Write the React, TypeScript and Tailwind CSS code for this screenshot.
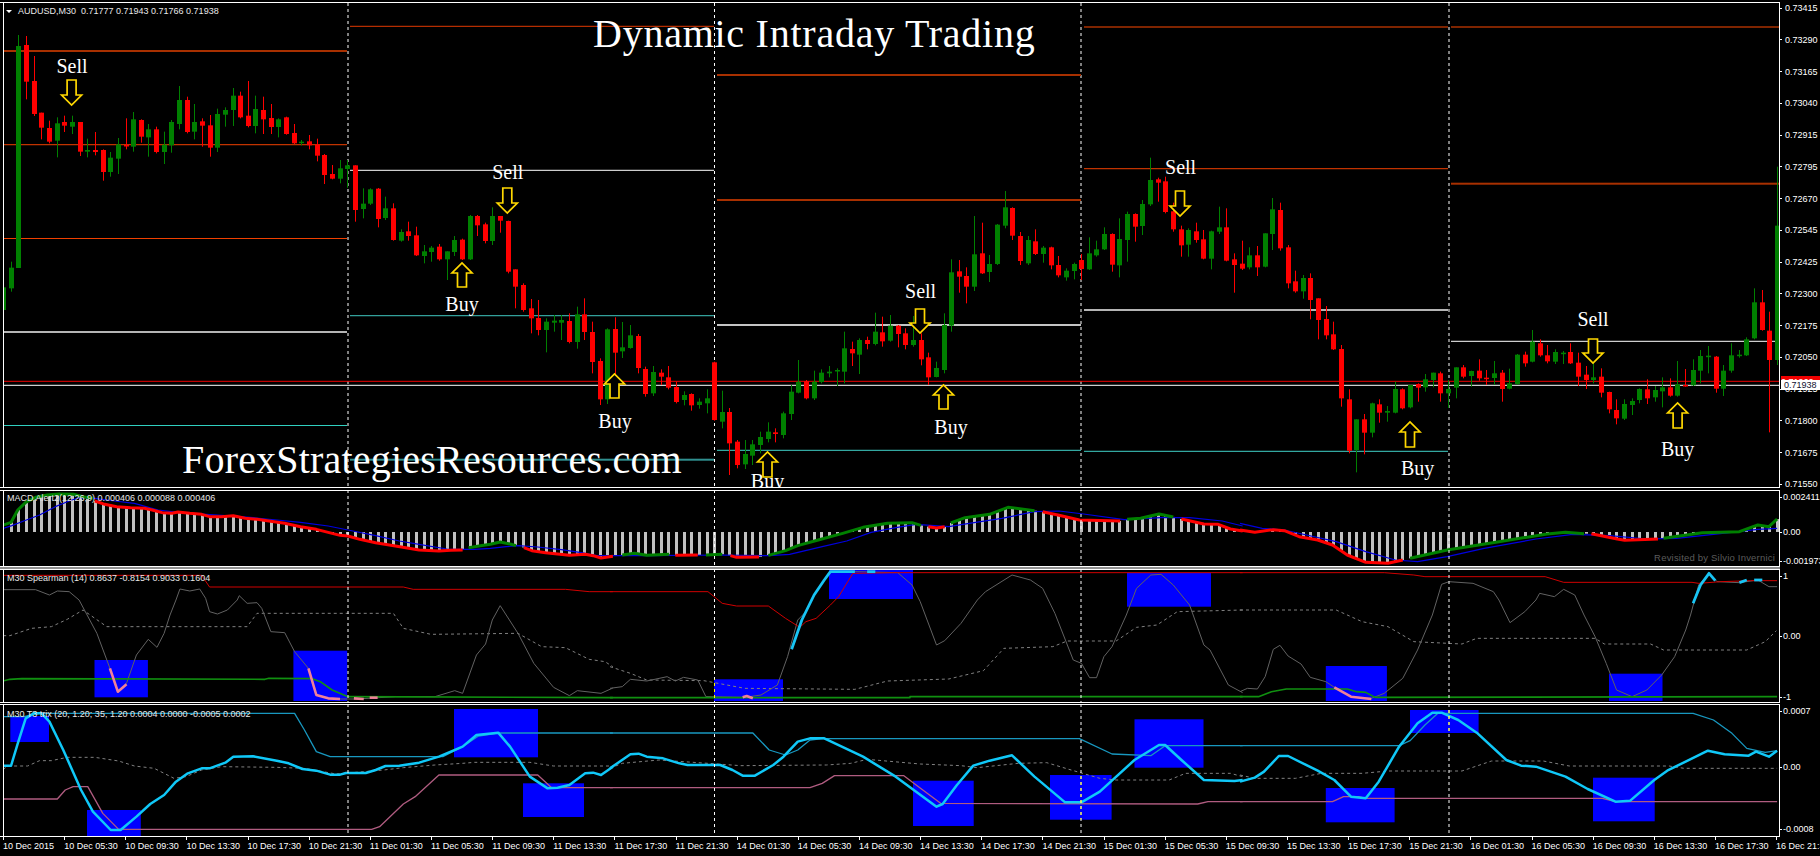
import React from "react"

type Crop = "a" | "b" | "c"
type Pt = [number, number]
type Pt3 = [number, number, number]
type Candle = ["G" | "R", number, number, number, number]

const GREEN = "#008000"
const RED = "#ff0000"
const BAR_X0 = 3.2
const BAR_STEP = 7.645

// measured on three overlapping crops of the chart, y is always px * 3
const CROPS: Record<Crop, [number, number]> = { a: [0, 620], b: [610, 640], c: [1240, 580] }

function toPts(crop: Crop, top: number, raw: string): Pt[] {
  const [x0, w] = CROPS[crop]
  return raw.split(" ").map((p) => {
    const [x, y] = p.split(",").map(Number)
    return [x0 + (x * w) / 1568, top + y / 3] as Pt
  })
}

const ptsAttr = (pts: Pt[]) => pts.map((p) => p.join(",")).join(" ")

// color, body top, body bottom, high, low
const CANDLES: Candle[] = [
  ["G",862,930,862,945],["G",803,865,785,875],["G",138,804,105,804],["R",135,245,108,298],["R",243,342,168,348],
  ["R",338,383,338,418],["R",384,425,362,430],["G",370,422,352,472],["R",366,377,347,396],["G",366,380,347,402],
  ["R",366,455,366,468],["G",450,455,416,472],["R",450,456,396,466],["R",450,516,448,542],["G",473,516,456,530],
  ["G",433,476,414,522],["R",435,438,355,448],["G",358,440,336,455],["R",360,410,358,428],["G",388,412,372,470],
  ["R",388,456,380,460],["G",434,456,395,492],["G",366,436,360,458],["G",300,372,258,388],["R",300,396,290,400],
  ["G",366,395,312,418],["R",364,377,355,440],["R",376,443,345,470],["G",342,443,326,456],["G",330,344,322,380],
  ["G",287,330,264,378],["R",287,352,275,355],["R",347,378,243,382],["G",327,378,287,400],["R",330,358,290,402],
  ["R",354,381,312,402],["G",358,381,355,412],["R",352,402,350,404],["R",399,430,372,432],["G",425,428,420,436],
  ["R",424,436,405,448],["R",434,467,416,484],["R",465,525,462,552],["R",522,536,495,538],["G",505,536,480,550],
  ["G",496,507,480,563],["R",496,630,496,665],["G",611,627,565,655],["G",568,611,565,615],["R",566,657,564,682],
  ["G",625,654,590,660],["R",625,720,610,722],["G",696,722,688,725],["R",694,708,665,722],["R",706,766,680,768],
  ["G",754,768,735,790],["G",743,756,738,785],["R",740,778,732,782],["G",754,778,754,840],["G",720,756,708,768],
  ["R",719,778,716,780],["G",648,778,645,780],["R",648,676,645,708],["R",673,723,668,730],["G",648,723,622,735],
  ["R",648,662,648,698],["R",663,815,662,820],["R",808,860,808,925],["R",855,930,850,935],["R",925,955,897,1000],
  ["R",954,990,900,1006],["G",965,990,955,1057],["G",962,968,945,995],["G",960,968,945,1020],["R",963,1026,940,1030],
  ["G",943,1026,920,1046],["R",943,996,895,1020],["R",996,1086,965,1120],["R",1083,1198,1075,1215],["G",988,1198,985,1212],
  ["R",987,1058,952,1125],["G",1042,1054,966,1074],["G",1006,1044,975,1046],["R",1008,1104,1002,1120],["R",1107,1182,1100,1190],
  ["G",1116,1180,1098,1188],["R",1118,1130,1108,1155],["R",1132,1163,1098,1168],["R",1161,1206,1145,1210],["G",1185,1200,1174,1216],
  ["R",1182,1216,1180,1232],["G",1205,1215,1195,1226],["G",1195,1210,1168,1240],["R",1087,1260,1085,1262],["G",1236,1265,1172,1285],
  ["R",1236,1330,1224,1425],["R",1325,1395,1320,1405],["G",1362,1393,1320,1407],["G",1333,1367,1320,1395],["G",1311,1335,1295,1360],
  ["G",1295,1317,1267,1327],["R",1297,1302,1285,1327],["G",1240,1305,1235,1315],["G",1175,1242,1155,1260],["G",1145,1178,1080,1180],
  ["R",1144,1195,1140,1198],["G",1145,1195,1112,1200],["G",1118,1146,1108,1150],["G",1115,1120,1098,1132],["G",1110,1114,1105,1158],
  ["G",1045,1115,995,1150],["R",1047,1060,1025,1098],["G",1020,1064,1015,1122],["R",1020,1032,1010,1048],["G",995,1032,938,1036],
  ["R",997,1024,950,1040],["G",977,1022,945,1025],["R",977,1002,975,1042],["R",1000,1035,985,1048],["G",1020,1035,948,1040],
  ["R",1020,1078,1000,1096],["R",1072,1132,1058,1155],["G",1104,1131,1085,1132],["G",975,1110,940,1120],["G",817,977,778,995],
  ["R",814,830,780,878],["R",828,860,802,910],["G",763,860,648,873],["R",760,820,668,822],["G",792,816,765,846],
  ["G",674,792,672,795],["G",622,677,573,685],["R",624,707,622,720],["R",708,783,696,795],["G",720,790,708,795],
  ["R",724,762,688,765],["G",743,762,738,788],["R",742,796,740,808],["R",795,826,768,832],["G",812,832,805,842],
  ["G",792,813,788,838],["R",780,807,762,840],["G",760,808,712,810],["G",748,766,722,770],["G",702,748,682,750],
  ["R",702,794,700,815],["G",717,796,655,832],["G",642,720,635,785],["R",642,680,640,725],["G",612,678,600,705],
  ["G",540,613,473,618],["R",538,548,533,605],["R",544,636,530,640],["R",634,688,608,695],["R",688,736,677,770],
  ["G",690,734,685,770],["R",694,720,668,728],["R",718,776,690,778],["G",694,776,692,808],["G",682,695,620,702],
  ["R",682,782,625,784],["R",778,795,760,878],["R",791,806,722,810],["G",766,802,742,808],["R",766,802,738,828],
  ["G",700,800,700,802],["G",628,702,594,750],["R",630,745,608,752],["R",742,850,735,865],["R",844,874,812,878],
  ["G",834,874,825,896],["R",834,900,820,958],["R",895,960,895,1018],["R",957,1006,918,1018],["R",1003,1048,965,1050],
  ["R",1047,1195,1035,1220],["R",1198,1352,1168,1360],["G",1258,1350,1258,1417],["R",1258,1298,1242,1363],["G",1210,1298,1208,1312],
  ["R",1213,1238,1198,1268],["G",1233,1238,1218,1265],["G",1167,1238,1145,1240],["R",1168,1225,1165,1228],["G",1155,1222,1155,1225],
  ["R",1152,1163,1150,1205],["G",1138,1162,1122,1175],["G",1118,1140,1118,1162],["R",1120,1180,1115,1205],["G",1167,1180,1140,1224],
  ["G",1102,1163,1102,1195],["R",1102,1130,1095,1135],["G",1113,1128,1112,1160],["R",1112,1135,1078,1142],["R",1133,1137,1110,1155],
  ["G",1120,1134,1083,1155],["R",1118,1167,1110,1205],["G",1150,1166,1106,1168],["G",1064,1152,1062,1155],["R",1064,1090,1055,1100],
  ["G",1025,1085,990,1087],["R",1030,1066,1018,1070],["R",1066,1084,1035,1090],["G",1056,1085,1048,1092],["G",1058,1061,1053,1092],
  ["R",1056,1090,1030,1092],["R",1088,1130,1058,1158],["R",1124,1140,1098,1167],["G",1132,1140,1090,1150],["R",1130,1178,1105,1192],
  ["R",1176,1228,1175,1240],["R",1230,1255,1198,1273],["G",1212,1256,1198,1260],["G",1203,1215,1195,1245],["G",1167,1200,1165,1210],
  ["R",1168,1195,1138,1212],["G",1170,1192,1158,1205],["G",1162,1174,1132,1222],["R",1162,1187,1135,1190],["G",1153,1187,1083,1190],
  ["R",1155,1158,1107,1160],["G",1110,1156,1078,1158],["G",1068,1112,1050,1150],["G",1067,1070,1038,1120],["R",1070,1166,1068,1178],
  ["G",1112,1166,1095,1188],["G",1066,1112,1030,1118],["G",1064,1068,1050,1073],["G",1018,1066,1012,1068],["G",907,1015,865,1018],
  ["R",907,990,870,992],["R",992,1080,935,1297],["G",677,1080,500,1095],
]

// daily pivot levels: x1, x2, y, color, thickness
const LEVELS: [number, number, number, string, number][] = [
  [3, 346, 51, "#a83000", 2],
  [3, 346, 144.7, "#f04000", 1],
  [3, 346, 238.5, "#f04000", 1],
  [3, 346, 332, "#b4b4b4", 2],
  [3, 346, 425.5, "#30d0c0", 1],
  [349, 713, 26.3, "#e03800", 1],
  [349, 713, 170.3, "#ffffff", 1],
  [349, 713, 315.7, "#40c8c0", 1],
  [349, 713, 459.7, "#309090", 2],
  [716, 1080, 75, "#a83000", 2],
  [716, 1080, 200, "#a83000", 2],
  [716, 1080, 325, "#c4c4c4", 2],
  [716, 1080, 450.3, "#40d0c8", 1],
  [1083, 1447, 27, "#a83000", 1.5],
  [1083, 1447, 168.7, "#f04000", 1],
  [1083, 1447, 310, "#b4b4b4", 2],
  [1083, 1447, 451.3, "#40d0c8", 1],
  [1450, 1779, 27, "#a83000", 1.5],
  [1450, 1779, 183.7, "#a83000", 2],
  [1450, 1779, 341.3, "#ffffff", 1],
  [3, 1779, 381.3, "#f00000", 1],
  [3, 1779, 385.3, "#ffffff", 1],
]

// cx, top, bottom
const DOWN_ARROWS: Pt3[] = [[71.6, 80, 105], [507.3, 188, 213], [920, 309, 333], [1180, 191, 216], [1593, 339, 363]]
const UP_ARROWS: Pt3[] = [[462, 263, 287], [614.5, 374, 398], [943.5, 385, 409], [767.5, 452, 477], [1410, 422, 447], [1677.6, 403, 428]]

const NOTES: [string, number, number][] = [
  ["Sell", 72, 73], ["Sell", 507.7, 179], ["Buy", 462, 311], ["Buy", 615, 428], ["Buy", 767.5, 488],
  ["Buy", 951, 434], ["Sell", 920.6, 298], ["Sell", 1180.6, 174], ["Buy", 1417.6, 475], ["Buy", 1677.6, 456], ["Sell", 1593, 326],
]

const MACD_THICK: [string, Crop, string][] = [
  [GREEN, "a", "8,330 28,322 45,285 65,262 90,247 120,240 150,237 185,238 210,245 235,250"],
  [RED, "a", "240,258 265,268 295,275 330,278 365,280 385,285 410,293 435,295 450,291 480,295 510,298 530,305 560,305 590,302 620,310 650,313 680,318 720,325 760,335 800,343 830,352 860,361 880,363 910,373 950,383 1000,393 1060,405 1110,408 1140,406 1170,405"],
  [GREEN, "a", "1185,398 1215,392 1240,388 1265,381 1290,387 1305,392"],
  [RED, "a", "1325,398 1345,407 1380,413 1410,417 1440,421 1480,418 1500,422 1520,429 1550,424"],
  [GREEN, "b", "30,420 60,415 90,421 145,418"],
  [RED, "b", "160,421 215,420"],
  [GREEN, "b", "235,420 275,418"],
  [RED, "b", "295,422 310,427 365,426"],
  [GREEN, "b", "388,421 430,407 460,392 510,375 570,355 620,337 680,325 740,323 762,331"],
  [RED, "b", "780,335 800,339 820,335"],
  [GREEN, "b", "835,324 870,308 930,298 975,277 1040,287"],
  [RED, "b", "1060,290 1100,301 1150,315 1250,318"],
  [GREEN, "b", "1267,313 1300,310 1345,297 1380,306"],
  [RED, "b", "1400,312 1455,327 1490,328 1520,342 1550,348"],
  [RED, "c", "0,345 40,352 90,344 120,347 160,365 210,375 250,390 290,420 340,442 400,445 440,435"],
  [GREEN, "c", "460,430 560,405 700,380 830,357 880,352 930,356"],
  [RED, "c", "950,356 1020,372 1040,376 1130,372"],
  [GREEN, "c", "1145,370 1250,353 1350,350 1400,330 1430,335 1452,312"],
]

const MACD_SIGNAL: [Crop, string][] = [
  ["a", "8,340 30,332 60,318 100,300 140,275 175,258 200,248 240,250 290,258 340,265 400,285 450,292 520,298 590,303 640,308 700,315 760,322 830,333 880,345 950,362 1010,378 1060,388 1130,402 1170,403 1200,403 1240,400 1280,395 1310,392 1360,396 1420,404 1470,413 1510,422 1540,422"],
  ["b", "0,422 100,422 270,420 390,422 440,418 520,395 580,378 640,352 700,338 750,328 830,335 880,325 960,310 1040,290 1100,288 1160,297 1260,314 1350,308 1420,308 1500,318 1550,333"],
  ["c", "0,325 60,340 120,345 180,360 260,380 340,410 420,435 480,440 560,425 660,400 800,372 900,358 1000,362 1100,372 1180,370 1280,358 1400,343 1452,340"],
]

const SPEAR_MAIN: [Crop, string][] = [
  ["a", "8,-31 90,-31 125,-15 145,-27 175,-25 200,0 245,100 278,205 298,275 320,250 345,165 375,118 397,142 415,100 430,45 445,0 455,-33 480,-27 505,-33 520,-5 530,35 550,42 575,30 600,0 605,-13 625,10 650,8 662,25 685,95 720,98 745,155 780,205 800,285 830,295 860,297 900,297 1000,290 1100,290 1150,272 1170,280 1205,165 1228,132 1245,60 1265,17 1310,100 1350,190 1400,262 1440,287 1460,272 1520,280 1550,264"],
  ["b", "0,265 30,260 50,238 90,243 140,230 160,243 180,232 215,240 235,290 330,292 370,285 410,255 435,170 460,60 480,35 500,-15 540,-85 600,-85 705,-82 740,-45 760,5 800,135 820,122 860,70 900,0 920,-25 985,-75 1030,-60 1060,-35 1090,40 1135,180 1155,190 1175,233 1192,233 1210,170 1230,140 1265,45 1290,-35 1325,-75 1350,-77 1380,-45 1420,15 1455,135 1470,150 1515,255 1550,278"],
  ["c", "0,275 20,265 47,267 68,230 90,148 108,136 130,168 165,192 190,232 232,245 255,262 300,290 355,295 390,280 440,235 480,150 520,45 545,-47 565,-55 630,-50 685,-25 700,0 730,68 770,35 800,0 810,-20 850,-10 875,-32 905,-15 930,45 960,110 990,190 1018,270 1060,290 1100,270 1140,225 1175,170 1205,90 1218,45 1240,-45 1268,-80 1290,-55 1350,-52 1400,-60 1430,-40 1452,-40"],
]

const SPEAR_DOTS: [Crop, string][] = [
  ["a", "8,107 25,107 80,85 130,80 170,58 210,30 270,80 625,80 650,40 995,40 1020,85 1090,103 1310,100 1370,140 1430,143 1490,178 1530,185 1550,200"],
  ["b", "0,200 50,220 90,240 230,242 330,265 600,268 680,243 830,237 915,212 965,145 1085,140 1120,123 1240,123 1290,82 1340,75 1390,35 1550,30"],
  ["c", "0,30 260,30 330,65 400,80 470,125 600,132 640,115 960,115 985,132 1110,132 1145,150 1370,150 1420,125 1450,92"],
]

const SPEAR_RED: [Crop, string][] = [
  ["a", "8,-74 510,-74 530,-39 1020,-39 1045,-32 1430,-32 1490,-25 1550,-25"],
  ["b", "0,-25 240,-25 275,10 310,18 388,18 430,55 465,82 480,65 505,55 540,15 560,-10 595,-80 705,-82 1550,-82"],
  ["c", "0,-82 390,-82 470,-75 500,-70 825,-70 875,-53 1222,-53 1240,-50 1300,-55 1380,-58 1452,-58"],
]

const SPEAR_GREEN: [Crop, string][] = [
  ["a", "8,243 25,238 55,236 670,238 680,235 790,236 810,245 840,270 880,290 1550,293"],
  ["b", "0,293 735,293 735,290 1550,290"],
  ["c", "0,290 50,290 85,275 125,267 290,267 315,275 340,277 365,292 1452,290"],
]

const SPEAR_PINK: [Crop, string][] = [
  ["a", "278,205 298,275 320,253"],
  ["a", "780,205 800,285 830,295 860,297"],
  ["a", "895,295 920,297"],
  ["a", "935,293 955,293"],
  ["b", "325,292 335,288 350,295"],
  ["c", "255,262 300,290 355,297"],
]

const SPEAR_CYAN: [Crop, string][] = [
  ["b", "445,148 470,60 482,30 500,-15 525,-60 540,-85 600,-85"],
  ["b", "630,-85 650,-85"],
  ["c", "1225,10 1245,-45 1268,-80 1285,-58"],
  ["c", "1350,-52 1370,-60"],
  ["c", "1390,-60 1412,-60"],
]

const TRIX_MAIN: [Crop, string][] = [
  ["a", "8,497 28,497 45,430 65,355 85,340 105,340 125,365 160,450 205,570 235,635 280,690 305,690 345,650 380,612 415,585 445,545 475,520 510,505 530,505 570,488 590,470 640,469 700,482 730,490 765,507 800,512 835,524 860,524 875,519 925,519 950,510 975,498 1010,497 1060,488 1110,470 1170,440 1205,405 1260,398 1290,440 1340,530 1385,565 1410,563 1440,555 1480,520 1500,518 1520,525 1550,500"],
  ["b", "0,505 50,463 70,461 90,470 130,475 170,490 190,495 270,495 300,510 325,527 355,527 400,495 425,470 460,425 490,415 525,415 620,470 700,530 800,620 815,612 850,555 890,497 930,482 985,466 1040,530 1115,607 1155,607 1200,575 1285,480 1345,435 1360,435 1400,480 1455,540 1530,543 1550,540"],
  ["c", "0,545 40,533 65,515 105,468 130,468 210,512 255,540 300,590 340,595 375,545 430,440 480,370 520,338 545,338 590,360 640,398 720,480 760,497 800,500 880,530 940,567 1015,605 1055,602 1120,540 1155,512 1265,452 1310,463 1375,467 1395,455 1430,470 1452,452"],
]

const TRIX_UPPER: [Crop, string][] = [
  ["a", "8,350 60,350 100,340 745,340 770,390 800,455 835,470 1120,470 1170,440 1210,408 1260,399 1550,399"],
  ["b", "0,399 350,399 390,450 430,465 460,450 490,420 520,416 1150,416 1230,462 1325,467 1360,437 1550,437"],
  ["c", "0,437 430,437 460,422 500,375 535,340 1225,340 1280,360 1330,400 1370,445 1420,457 1452,452"],
]

const TRIX_LOWER: [Crop, string][] = [
  ["a", "8,597 145,597 165,570 185,560 222,560 260,640 300,688 940,688 960,680 1020,612 1050,590 1110,525 1360,525 1395,563 1550,563"],
  ["b", "0,563 490,563 520,550 550,527 720,527 750,555 810,610 1440,612 1465,605 1550,605"],
  ["c", "0,605 250,605 280,590 320,590 340,595 980,595 1015,605 1452,605"],
]

const TRIX_DOTS: [Crop, string][] = [
  ["a", "8,508 20,498 70,498 100,482 130,482 170,472 240,472 300,483 340,498 390,505 440,535 470,530 510,510 560,500 700,502 770,505 850,522 970,510 1020,503 1100,495 1170,490 1200,487 1340,487 1400,498 1550,498"],
  ["b", "0,505 30,490 120,480 240,490 320,497 530,495 590,490 630,478 760,492 860,497 900,503 1000,490 1070,488 1130,510 1200,535 1240,540 1370,540 1410,520 1520,520 1550,530"],
  ["c", "0,525 40,535 150,535 220,520 330,520 400,513 600,513 680,483 820,483 890,498 1160,498 1200,505 1452,505"],
]

// x1, x2, y1, y2
const SPEAR_BOXES = [
  [94.5, 147.9, 660, 697.3], [293.4, 347.2, 650.7, 701], [714, 783, 679.3, 701], [829, 913, 570, 599],
  [1127, 1211, 572.7, 606.7], [1325.8, 1386.9, 666, 701], [1609, 1662.5, 673.7, 701],
]
const TRIX_BOXES = [
  [10.3, 49, 716, 742], [87, 140.8, 810, 836], [454, 538, 709, 757.3], [523, 584, 783.3, 817], [913, 973.7, 780.7, 826],
  [1050, 1111.6, 775, 819.7], [1134.5, 1203.5, 719.3, 767.7], [1325.8, 1394.6, 788, 822.3], [1410, 1478.6, 710, 733], [1593, 1654.7, 777.7, 821.3],
]

const DIVIDERS = [348, 714.5, 1081, 1449]

const MAIN_AXIS = ["0.73415","0.73290","0.73165","0.73040","0.72915","0.72795","0.72670","0.72545","0.72425","0.72300","0.72175","0.72050","0.71925","0.71800","0.71675","0.71550"]

const TIME_LABELS = [
  "10 Dec 2015","10 Dec 05:30","10 Dec 09:30","10 Dec 13:30","10 Dec 17:30","10 Dec 21:30",
  "11 Dec 01:30","11 Dec 05:30","11 Dec 09:30","11 Dec 13:30","11 Dec 17:30","11 Dec 21:30",
  "14 Dec 01:30","14 Dec 05:30","14 Dec 09:30","14 Dec 13:30","14 Dec 17:30","14 Dec 21:30",
  "15 Dec 01:30","15 Dec 05:30","15 Dec 09:30","15 Dec 13:30","15 Dec 17:30","15 Dec 21:30",
  "16 Dec 01:30","16 Dec 05:30","16 Dec 09:30","16 Dec 13:30","16 Dec 17:30","16 Dec 21:30",
]

function Lines({ data, top, color, width, dash }: { data: [Crop, string][]; top: number; color: string; width: number; dash?: string }) {
  return (
    <>
      {data.map(([crop, raw], i) => (
        <polyline key={i} points={ptsAttr(toPts(crop, top, raw))} fill="none" stroke={color} strokeWidth={width} strokeDasharray={dash} strokeLinejoin="round" />
      ))}
    </>
  )
}

function Boxes({ data }: { data: number[][] }) {
  return (
    <>
      {data.map(([x1, x2, y1, y2], i) => (
        <rect key={i} x={x1} y={y1} width={x2 - x1} height={y2 - y1} fill="#0000ff" />
      ))}
    </>
  )
}

/** Period separators; they show yellow where they cross a blue box */
function Dividers({ top, bottom, boxes = [] }: { top: number; bottom: number; boxes?: number[][] }) {
  return (
    <>
      {DIVIDERS.map((x) => (
        <line key={x} x1={x} x2={x} y1={top} y2={bottom} stroke="#ffffff" strokeWidth={1} strokeDasharray="3 3" />
      ))}
      {DIVIDERS.flatMap((x) =>
        boxes
          .filter((b) => x >= b[0] && x <= b[1])
          .map((b) => (
            <line key={`${x}-${b[2]}`} x1={x} x2={x} y1={b[2]} y2={b[3]} stroke="#ffff00" strokeWidth={1} strokeDasharray="3 3" strokeDashoffset={(b[2] - top) % 6} />
          )),
      )}
    </>
  )
}

function Arrow({ cx, y1, y2, down }: { cx: number; y1: number; y2: number; down?: boolean }) {
  const points = down
    ? `${cx - 4.5},${y1} ${cx + 4.5},${y1} ${cx + 4.5},${y2 - 10} ${cx + 10},${y2 - 10} ${cx},${y2} ${cx - 10},${y2 - 10} ${cx - 4.5},${y2 - 10}`
    : `${cx - 4.5},${y2} ${cx + 4.5},${y2} ${cx + 4.5},${y1 + 10} ${cx + 10},${y1 + 10} ${cx},${y1} ${cx - 10},${y1 + 10} ${cx - 4.5},${y1 + 10}`
  return <polygon points={points} fill="#000000" stroke="#ffd800" strokeWidth={1.7} />
}

function MainChart() {
  return (
    <>
      <Dividers top={3} bottom={488} />
      {LEVELS.map(([x1, x2, y, color, t], i) => (
        <rect key={i} x={x1 + 1} y={y - t / 2} width={x2 - x1} height={t} fill={color} />
      ))}
      {CANDLES.map(([c, top, bottom, hi, lo], i) => {
        const cx = Math.round(BAR_X0 + BAR_STEP * i)
        const fill = c === "G" ? GREEN : RED
        return (
          <g key={i} fill={fill}>
            <rect x={cx} y={hi / 3} width={1} height={(lo - hi) / 3} />
            <rect x={cx - 2} y={top / 3} width={5} height={Math.max((bottom - top) / 3, 1.5)} />
          </g>
        )
      })}
      {DOWN_ARROWS.map(([cx, y1, y2], i) => (
        <Arrow key={i} cx={cx} y1={y1} y2={y2} down />
      ))}
      {UP_ARROWS.map(([cx, y1, y2], i) => (
        <Arrow key={i} cx={cx} y1={y1} y2={y2} />
      ))}
      {NOTES.map(([label, x, y], i) => (
        <text key={i} x={x} y={y} textAnchor="middle" fill="#ffffff" fontSize={20} fontFamily="'Liberation Serif', serif">
          {label}
        </text>
      ))}
    </>
  )
}

function MacdChart() {
  const thick = MACD_THICK.map(([color, crop, raw]) => ({ color, pts: toPts(crop, 415, raw) }))
  const all = thick.flatMap((s) => s.pts)
  const yAt = (x: number) => {
    for (let i = 1; i < all.length; i++) {
      const [x1, y1] = all[i - 1]
      const [x2, y2] = all[i]
      if (x2 > x1 && x >= x1 && x <= x2) return y1 + ((x - x1) / (x2 - x1)) * (y2 - y1)
    }
    return 532
  }
  return (
    <>
      {CANDLES.map((_, i) => {
        const cx = Math.round(BAR_X0 + BAR_STEP * i)
        const y = yAt(cx)
        return <rect key={i} x={cx - 1} y={Math.min(y, 532)} width={3} height={Math.abs(y - 532)} fill="#c0c0c0" />
      })}
      <Lines data={MACD_SIGNAL} top={415} color="#0000e0" width={1.2} />
      {thick.map((s, i) => (
        <polyline key={i} points={ptsAttr(s.pts)} fill="none" stroke={s.color} strokeWidth={3} strokeLinejoin="round" />
      ))}
      <Dividers top={490} bottom={567} />
    </>
  )
}

function SpearmanChart() {
  return (
    <>
      <Boxes data={SPEAR_BOXES} />
      <Lines data={SPEAR_DOTS} top={600} color="#808080" width={1} dash="3 3" />
      <Lines data={SPEAR_MAIN} top={600} color="#626262" width={1} />
      <Lines data={SPEAR_RED} top={600} color="#d00000" width={1} />
      <Lines data={SPEAR_GREEN} top={600} color="#109010" width={1.6} />
      <Lines data={SPEAR_PINK} top={600} color="#f08098" width={2.6} />
      <Lines data={SPEAR_CYAN} top={600} color="#18c4f4" width={2.8} />
      <Dividers top={569} bottom={703} boxes={SPEAR_BOXES} />
    </>
  )
}

function TrixChart() {
  return (
    <>
      <Boxes data={TRIX_BOXES} />
      <Lines data={TRIX_DOTS} top={600} color="#808080" width={1} dash="3 3" />
      <Lines data={TRIX_UPPER} top={600} color="#1898c0" width={1.3} />
      <Lines data={TRIX_LOWER} top={600} color="#b05c80" width={1.3} />
      <Lines data={TRIX_MAIN} top={600} color="#10c8f8" width={2.5} />
      <Dividers top={704} bottom={837} boxes={TRIX_BOXES} />
    </>
  )
}

function Pane({ heightClass, top, height, axis, children, overlay }: {
  heightClass: string
  top: number
  height: number
  axis: React.ReactNode
  children: React.ReactNode
  overlay?: React.ReactNode
}) {
  return (
    <div className={`flex shrink-0 ${heightClass}`}>
      <div className="w-[1780px] shrink-0 border-y border-white pl-[3px]">
        <div className="relative h-full border-x border-white overflow-hidden">
          <svg className="block" width={1775} height={height - 2} viewBox={`4 ${top + 1} 1775 ${height - 2}`}>
            {children}
          </svg>
          {overlay}
        </div>
      </div>
      {axis}
    </div>
  )
}

function AxisLabel({ label, className = "", wide }: { label: string; className?: string; wide?: boolean }) {
  return (
    <div className={`flex h-[12px] items-center whitespace-nowrap leading-[12px] ${className}`}>
      <span className="h-px w-[2px] shrink-0 bg-white" />
      <span className={wide ? "ml-[3px]" : "ml-[1px]"}>{label}</span>
    </div>
  )
}

function Legend({ children, className }: { children: React.ReactNode; className: string }) {
  return <div className={`absolute left-[3px] whitespace-nowrap text-[9px] leading-[12px] text-[#e8e8e8] ${className}`}>{children}</div>
}

export default function App() {
  return (
    <div className="relative flex h-[856px] w-[1820px] flex-col overflow-hidden bg-black pt-[2px] font-['Liberation_Sans',sans-serif] text-[9px] text-white">
      <Pane
        heightClass="h-[486px]"
        top={2}
        height={486}
        axis={
          <div className="flex flex-col gap-[19.75px]">
            {MAIN_AXIS.map((v) => (
              <AxisLabel key={v} label={v} wide />
            ))}
          </div>
        }
        overlay={
          <>
            <div className="absolute left-[-1px] top-0 h-[29px] w-[4px] bg-black" />
            <Legend className="top-[2px] !left-[2px] flex items-center gap-[3px]">
              <span className="h-0 w-0 border-x-[3px] border-t-[3px] border-x-transparent border-t-white" />
              <span className="ml-[3px]">AUDUSD,M30&nbsp; 0.71777 0.71943 0.71766 0.71938</span>
            </Legend>
            <div className="absolute left-[589px] top-[8px] whitespace-nowrap font-['Liberation_Serif',serif] text-[40px] leading-[46px] tracking-[0.75px] text-white">
              Dynamic Intraday Trading
            </div>
            <div className="absolute left-[178px] top-[434px] whitespace-nowrap font-['Liberation_Serif',serif] text-[40px] leading-[46px] tracking-[0.2px] text-white">
              ForexStrategiesResources.com
            </div>
          </>
        }
      >
        <MainChart />
      </Pane>

      {/* current price tags sit on top of the price scale */}
      <div className="absolute left-[1781px] top-[376px] h-[6px] w-[39px] overflow-hidden bg-[#f00000] text-[9px] leading-[12px] text-white">0.71962</div>
      <div className="absolute left-[1781px] top-[380px] h-[10px] w-[39px] bg-white pl-[3px] text-[9px] leading-[10px] text-[#101030]">0.71938</div>

      <div className="h-[2px] shrink-0" />

      <Pane
        heightClass="h-[77px]"
        top={490}
        height={77}
        axis={
          <div className="flex flex-col pt-[1px]">
            <AxisLabel label="0.002411" />
            <AxisLabel label="0.00" className="mt-[23px]" />
            <AxisLabel label="-0.001973" className="mt-[17px]" />
          </div>
        }
        overlay={
          <>
            <Legend className="top-[1px]">MACD Alert2(12,26,9) 0.000406 0.000088 0.000406</Legend>
            <div className="absolute right-[4px] top-[61px] whitespace-nowrap text-[9.5px] leading-[12px] tracking-[0.2px] text-[#5c5c5c]">Revisited by Silvio Invernici</div>
          </>
        }
      >
        <MacdChart />
      </Pane>

      <div className="h-[2px] w-[1780px] shrink-0 bg-[#909090]" />

      <Pane
        heightClass="h-[134px]"
        top={569}
        height={134}
        axis={
          <div className="flex flex-col pt-[1px]">
            <AxisLabel label="1" />
            <AxisLabel label="0.00" className="mt-[48px]" />
            <AxisLabel label="-1" className="mt-[49px]" />
          </div>
        }
        overlay={<Legend className="top-[2px]">M30 Spearman (14) 0.8637 -0.8154 0.9033 0.1604</Legend>}
      >
        <SpearmanChart />
      </Pane>

      <div className="h-px shrink-0" />

      <Pane
        heightClass="h-[133px]"
        top={704}
        height={133}
        axis={
          <div className="flex flex-col pt-[1px]">
            <AxisLabel label="0.0007" />
            <AxisLabel label="0.00" className="mt-[44px]" />
            <AxisLabel label="-0.0008" className="mt-[50px]" />
          </div>
        }
        overlay={<Legend className="top-[3px]">M30 T3 trix (20, 1.20; 35, 1.20 0.0004 0.0000 -0.0005 0.0002</Legend>}
      >
        <TrixChart />
      </Pane>

      <div className="flex pl-[3px]">
        {TIME_LABELS.map((t) => (
          <div key={t} className="w-[61.15px] shrink-0">
            <div className="h-[3px] w-px bg-white" />
            <div className="whitespace-nowrap leading-[12px]">{t}</div>
          </div>
        ))}
      </div>
    </div>
  )
}
